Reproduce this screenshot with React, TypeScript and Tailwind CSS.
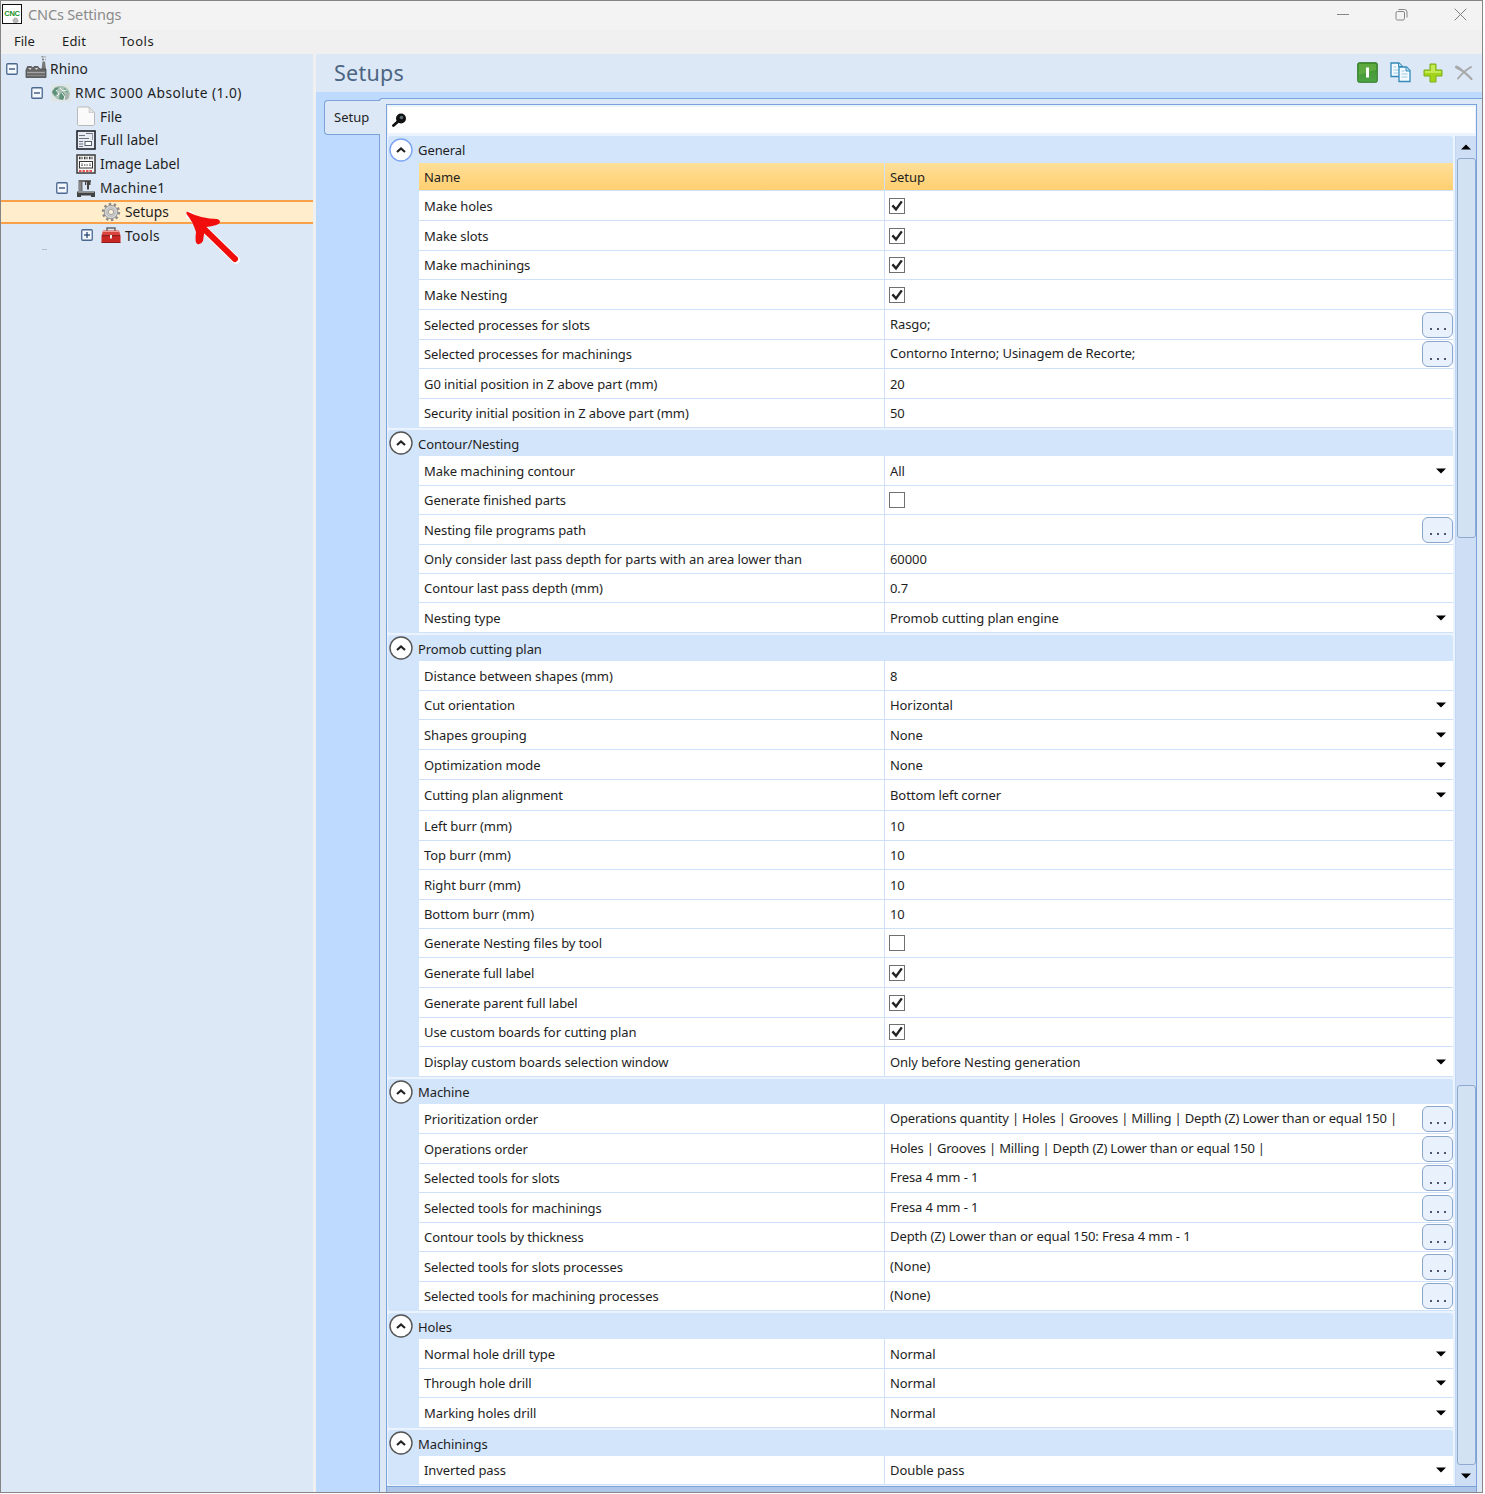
import React from 'react';

type Row = {
  label: string;
  h: string;
  value?: string;
  checked?: boolean;
  kind?: 'text' | 'check' | 'browse' | 'select';
  active?: boolean;
  tight?: boolean;
};

type Group = { title: string; head: string; rows: Row[]; focused?: boolean };

const groups: Group[] = [
  {
    title: 'General',
    head: 'h-[27px]',
    focused: true,
    rows: [
      { label: 'Name', h: 'h-[28px]', value: 'Setup', active: true },
      { label: 'Make holes', h: 'h-[30px]', kind: 'check', checked: true },
      { label: 'Make slots', h: 'h-[30px]', kind: 'check', checked: true },
      { label: 'Make machinings', h: 'h-[29px]', kind: 'check', checked: true },
      { label: 'Make Nesting', h: 'h-[30px]', kind: 'check', checked: true },
      { label: 'Selected processes for slots', h: 'h-[30px]', kind: 'browse', value: 'Rasgo;' },
      { label: 'Selected processes for machinings', h: 'h-[29px]', kind: 'browse', value: 'Contorno Interno; Usinagem de Recorte;' },
      { label: 'G0 initial position in Z above part (mm)', h: 'h-[30px]', value: '20' },
      { label: 'Security initial position in Z above part (mm)', h: 'h-[29px]', value: '50' },
    ],
  },
  {
    title: 'Contour/Nesting',
    head: 'h-[26px]',
    rows: [
      { label: 'Make machining contour', h: 'h-[30px]', kind: 'select', value: 'All' },
      { label: 'Generate finished parts', h: 'h-[29px]', kind: 'check' },
      { label: 'Nesting file programs path', h: 'h-[30px]', kind: 'browse', value: '' },
      { label: 'Only consider last pass depth for parts with an area lower than', h: 'h-[29px]', value: '60000' },
      { label: 'Contour last pass depth (mm)', h: 'h-[29px]', value: '0.7' },
      { label: 'Nesting type', h: 'h-[30px]', kind: 'select', value: 'Promob cutting plan engine' },
    ],
  },
  {
    title: 'Promob cutting plan',
    head: 'h-[26px]',
    rows: [
      { label: 'Distance between shapes (mm)', h: 'h-[30px]', value: '8' },
      { label: 'Cut orientation', h: 'h-[29px]', kind: 'select', value: 'Horizontal' },
      { label: 'Shapes grouping', h: 'h-[30px]', kind: 'select', value: 'None' },
      { label: 'Optimization mode', h: 'h-[30px]', kind: 'select', value: 'None' },
      { label: 'Cutting plan alignment', h: 'h-[31px]', kind: 'select', value: 'Bottom left corner' },
      { label: 'Left burr (mm)', h: 'h-[30px]', value: '10' },
      { label: 'Top burr (mm)', h: 'h-[29px]', value: '10' },
      { label: 'Right burr (mm)', h: 'h-[30px]', value: '10' },
      { label: 'Bottom burr (mm)', h: 'h-[29px]', value: '10' },
      { label: 'Generate Nesting files by tool', h: 'h-[29px]', kind: 'check' },
      { label: 'Generate full label', h: 'h-[30px]', kind: 'check', checked: true },
      { label: 'Generate parent full label', h: 'h-[30px]', kind: 'check', checked: true },
      { label: 'Use custom boards for cutting plan', h: 'h-[29px]', kind: 'check', checked: true },
      { label: 'Display custom boards selection window', h: 'h-[30px]', kind: 'select', value: 'Only before Nesting generation' },
    ],
  },
  {
    title: 'Machine',
    head: 'h-[25px]',
    rows: [
      { label: 'Prioritization order', h: 'h-[30px]', kind: 'browse', tight: true, value: 'Operations quantity | Holes | Grooves | Milling | Depth (Z) Lower than or equal 150 |' },
      { label: 'Operations order', h: 'h-[30px]', kind: 'browse', tight: true, value: 'Holes | Grooves | Milling | Depth (Z) Lower than or equal 150 |' },
      { label: 'Selected tools for slots', h: 'h-[29px]', kind: 'browse', value: 'Fresa 4 mm - 1' },
      { label: 'Selected tools for machinings', h: 'h-[30px]', kind: 'browse', value: 'Fresa 4 mm - 1' },
      { label: 'Contour tools by thickness', h: 'h-[29px]', kind: 'browse', value: 'Depth (Z) Lower than or equal 150: Fresa 4 mm - 1' },
      { label: 'Selected tools for slots processes', h: 'h-[30px]', kind: 'browse', value: '(None)' },
      { label: 'Selected tools for machining processes', h: 'h-[29px]', kind: 'browse', value: '(None)' },
    ],
  },
  {
    title: 'Holes',
    head: 'h-[26px]',
    rows: [
      { label: 'Normal hole drill type', h: 'h-[30px]', kind: 'select', value: 'Normal' },
      { label: 'Through hole drill', h: 'h-[29px]', kind: 'select', value: 'Normal' },
      { label: 'Marking holes drill', h: 'h-[30px]', kind: 'select', value: 'Normal' },
    ],
  },
  {
    title: 'Machinings',
    head: 'h-[26px]',
    rows: [{ label: 'Inverted pass', h: 'h-[29px]', kind: 'select', value: 'Double pass' }],
  },
];

function CheckBox({ checked }: { checked?: boolean }) {
  return (
    <svg width="16" height="16" viewBox="0 0 16 16" className="-ml-px shrink-0">
      <rect x="0.5" y="0.5" width="15" height="15" fill="#fff" stroke="#707070" />
      {checked && <path d="M3.4 7.4 L7 11.4 L12.8 3.4" fill="none" stroke="#222" strokeWidth="2.4" />}
    </svg>
  );
}

function Expander({ open }: { open: boolean }) {
  return (
    <svg width="12" height="12" viewBox="0 0 12 12" className="shrink-0">
      <rect x="0.75" y="0.75" width="10.5" height="10.5" rx="1" fill="#f4f8fd" stroke="#4a678f" strokeWidth="1.3" />
      <path d="M3 6h6" stroke="#1d3d6b" strokeWidth="1.2" />
      {!open && <path d="M6 3v6" stroke="#1d3d6b" strokeWidth="1.2" />}
    </svg>
  );
}

function FactoryIcon() {
  return (
    <svg width="22" height="22" viewBox="0 0 22 22">
      <path d="M16.500 .8h4M17 3.500h3.500" stroke="#777" strokeWidth="1.3" strokeDasharray="2 1" />
      <path d="M17.500 5.500h2.500l1 8h-4.500z" fill="#777" />
      <path d="M1 21.500V14l1.500-3.500h4L8 12l1-1.500h4L14 12l1 1h6v8.500z" fill="#666" stroke="#4c4c4c" strokeWidth="0.8" />
      <path d="M3 12.500l3.500-.8-1 2zM9.500 12.500l3.500-.8-1 2z" fill="#e3e3e3" />
      <path d="M2 16.500h18" stroke="#a5a5a5" strokeWidth="1.4" />
      <path d="M2 19.500h18" stroke="#888" strokeWidth="1.2" />
    </svg>
  );
}

function RhinoIcon() {
  return (
    <svg width="20" height="18" viewBox="0 0 20 18">
      <rect width="20" height="18" fill="#dfe6e6" />
      <path d="M1 7L4 3l4-1 4 0 4 2 3 5-1 5-3 2-1-4-3 4-5-1-5-5z" fill="#a9c2b5" />
      <path d="M1 8l3-4 4-1-2 3 1 3-3 3zM9 10l3-2 2 3-2 5-4-1zM13 4l3 2 1 3-3-2z" fill="#5f9178" />
      <path d="M5 6l3 4-2 2M9 4l3 3 4-1M11 9l3 4" stroke="#eef5f0" fill="none" />
      <path d="M15 9l3 1-1 5-3 1" fill="#a9b0ad" />
    </svg>
  );
}

function FileIcon() {
  return (
    <svg width="20" height="20" viewBox="0 0 20 20">
      <path d="M2.5 1C2 1 1.5 1.5 1.5 2v16c0 .8.5 1.5 1 1.5h15c.5 0 1-.7 1-1.5V6.500L13 1z" fill="#fafafa" stroke="#b9b9b9" />
      <path d="M13 1v5.500h5.500z" fill="#e3e3e3" stroke="#c2c2c2" strokeWidth="0.7" />
    </svg>
  );
}

function FullLabelIcon() {
  return (
    <svg width="20" height="20" viewBox="0 0 20 20">
      <rect x="1" y="1" width="18" height="18" fill="#e9ecf2" stroke="#20242c" strokeWidth="1.6" />
      <path d="M3 5.500h6M3 8.500h10M3 11.500h4M3 14h4M3 16.500h4M10 3.500h6" stroke="#6a7382" strokeWidth="1.2" />
      <path d="M16.500 3v7" stroke="#8e96a3" />
      <rect x="9" y="11.500" width="6.500" height="4" fill="#fff" stroke="#555e6c" />
    </svg>
  );
}

function ImageLabelIcon() {
  return (
    <svg width="20" height="20" viewBox="0 0 20 20">
      <rect x="1" y="1" width="18" height="18" fill="#f6f6f6" stroke="#3a3a3a" strokeWidth="1.5" />
      <path d="M3 4h14" stroke="#333" strokeWidth="2.4" strokeDasharray="1.5 1 1 1.5" />
      <rect x="3.500" y="7.500" width="13" height="6.500" fill="#fff" stroke="#333" />
      <path d="M6 9.500v3M14 9.500v3M8 11h4" stroke="#333" strokeWidth="1.2" strokeDasharray="1 .6" />
      <path d="M3 17h14" stroke="#e02020" strokeWidth="1.4" strokeDasharray="2.5 1" />
    </svg>
  );
}

function MachineIcon() {
  return (
    <svg width="20" height="20" viewBox="0 0 20 20">
      <path d="M2.500 2H15v2H6.500v9h-4z" fill="#6c6c6c" />
      <path d="M4 4v9" stroke="#a3a3a3" />
      <path d="M9 3h5.500v4H13v4.500h-2V7H9z" fill="#444" />
      <path d="M10.500 4v3" stroke="#bbb" />
      <path d="M1 13.500h18V19h-4v-1.500H5V19H1z" fill="#434343" />
      <path d="M2 14.500h16" stroke="#8d8d8d" />
    </svg>
  );
}

function GearIcon() {
  return (
    <svg width="20" height="20" viewBox="0 0 20 20">
      <circle cx="10" cy="10" r="8" fill="none" stroke="#8b8b8b" strokeWidth="2.4" strokeDasharray="2.5 2.526" />
      <circle cx="10" cy="10" r="6.700" fill="#d4d4d4" stroke="#8f8f8f" strokeWidth="0.9" />
      <circle cx="10" cy="10" r="4.200" fill="none" stroke="#b5b5b5" strokeWidth="1" />
      <circle cx="10" cy="10" r="2.600" fill="#fdf3dc" stroke="#909090" strokeWidth="0.8" />
    </svg>
  );
}

function ToolboxIcon() {
  return (
    <svg width="20" height="18" viewBox="0 0 20 18">
      <path d="M6 5V2h8v3" fill="none" stroke="#666" strokeWidth="1.5" />
      <path d="M2 4.500h16l1.500 5H.5z" fill="#d8453f" />
      <path d="M.5 9.500h19V16.500H.5z" fill="#c92724" />
      <path d="M1 9.700h18" stroke="#7f1212" />
      <path d="M2 5.500h16" stroke="#f09a92" />
      <rect x="9" y="9" width="2" height="3.5" fill="#eee" />
      <path d="M.5 16.500h19" stroke="#8e1b1b" />
    </svg>
  );
}

const tree = [
  { name: 'Rhino', pad: 'pl-[5px]', open: true, icon: <FactoryIcon />, shift: 'pb-[3px]', tracking: 'tracking-[0.1px]' },
  { name: 'RMC 3000 Absolute (1.0)', pad: 'pl-[30px]', open: true, icon: <RhinoIcon />, tracking: 'tracking-[0.45px]' },
  { name: 'File', pad: 'pl-[55px]', icon: <FileIcon /> },
  { name: 'Full label', pad: 'pl-[55px]', icon: <FullLabelIcon />, tracking: 'tracking-[0.1px]' },
  { name: 'Image Label', pad: 'pl-[55px]', icon: <ImageLabelIcon /> },
  { name: 'Machine1', pad: 'pl-[55px]', open: true, icon: <MachineIcon />, tracking: 'tracking-[0.3px]' },
  { name: 'Setups', pad: 'pl-[80px]', icon: <GearIcon />, selected: true },
  { name: 'Tools', pad: 'pl-[80px]', open: false, icon: <ToolboxIcon />, tracking: 'tracking-[0.3px]' },
];

function TitleBar() {
  return (
    <div className="flex h-[29px] items-center bg-[#f3f3f3] pl-px">
      <div className="relative -mt-[3px] flex size-[20px] items-center justify-center border-[1.5px] border-[#111] bg-white">
        <svg width="7" height="6" viewBox="0 0 7 6" className="absolute bottom-0 right-[2px]">
          <circle cx="3.5" cy="3.5" r="2.5" fill="#bbb" stroke="#999" strokeDasharray="1.5 1" />
        </svg>
        <span className="relative font-['Liberation_Sans',sans-serif] text-[7.5px] font-bold leading-[12px] tracking-[-0.2px] text-[#17911f]">CNC</span>
      </div>
      <span className="-mt-[2px] ml-[6px] text-[14.5px] tracking-[-0.15px] text-[#8a8a8a]">CNCs Settings</span>
      <div className="-mt-[2px] ml-auto flex items-center gap-[44px] pr-[15px]">
        <svg width="14" height="14" viewBox="0 0 14 14" className="mr-px">
          <path d="M1 6.500h12" stroke="#868686" />
        </svg>
        <svg width="13" height="13" viewBox="0 0 13 13" fill="none" stroke="#868686">
          <rect x="1" y="3.5" width="8.5" height="8.5" rx="1.5" />
          <path d="M3.500 1.500h6a2.500 2.500 0 0 1 2.500 2.500v5.500" />
        </svg>
        <svg width="13" height="13" viewBox="0 0 13 13" className="ml-[2px]">
          <path d="M.7.7l11.600 11.600M12.300.7L.7 12.300" stroke="#808080" />
        </svg>
      </div>
    </div>
  );
}

function Tree() {
  return (
    <div className="relative w-[312px] shrink-0 bg-[#dce8f6] pt-[3px]">
      {tree.map((n) => (
        <div
          key={n.name}
          className={`flex h-[23.8px] items-center ${n.pad} ${
            n.selected ? 'border-y-2 border-[#f9a04a] bg-[#ffedcb]' : ''
          }`}
        >
          <div className="w-[12px]">{n.open !== undefined && <Expander open={n.open} />}</div>
          <div className={`ml-[7px] flex w-[22px] justify-center ${n.shift ?? ''}`}>{n.icon}</div>
          <span className={`ml-[3px] whitespace-nowrap pt-px text-[13.75px] text-[#1e1e1e] ${n.tracking ?? ''}`}>{n.name}</span>
        </div>
      ))}
      <div className="ml-[41px] mt-[2px] h-px w-[5px] bg-[#b3bccb]" />
      <svg width="60" height="60" viewBox="0 0 60 60" className="absolute left-[181px] top-[154px]">
        <path d="M8 7.500L54 52" stroke="#fff" strokeWidth="8" strokeLinecap="round" />
        <path d="M17 16L53 51" stroke="#f20d0d" strokeWidth="6" strokeLinecap="round" />
        <path d="M4.500 4Q5 3.500 6 4Q20 11 35 11Q39 12 37.500 15Q36 17.500 24 19Q21.500 27 21 33Q19 37 15.500 36Q12.500 35 14 24Q11 14 4.500 6z" fill="#f20d0d" />
      </svg>
    </div>
  );
}

function HeaderIcons() {
  return (
    <div className="ml-auto flex items-center pb-px pr-[8px]">
      <svg width="21" height="21" viewBox="0 0 21 21">
        <defs>
          <linearGradient id="on" x1="0" y1="0" x2="0" y2="1">
            <stop offset="0" stopColor="#3f9328" />
            <stop offset="1" stopColor="#4ea346" />
          </linearGradient>
        </defs>
        <rect x="0.7" y="0.7" width="19.6" height="19.6" rx="1.5" fill="url(#on)" stroke="#347a2b" />
        <path d="M2 2h17v6q-8 1-17 5z" fill="#70b84d" opacity=".6" />
        <rect x="9" y="5.5" width="3" height="10" fill="#fff" />
      </svg>
      <svg width="21" height="21" viewBox="0 0 21 21" className="ml-[12px]" stroke="#3389b8" fill="#f4fbff">
        <path d="M1 1h8l3.500 3.500V14.500H1z" strokeWidth="1.3" />
        <path d="M8.500 1v3.500h4" fill="#b7e0f5" />
        <path d="M3.500 5h3M3.500 8h6M3.500 11h5" stroke="#9fcbe6" />
        <path d="M9 5h7.500l3.500 3.500v11H9z" strokeWidth="1.3" />
        <path d="M16 5v4h4" fill="#b7e0f5" />
        <path d="M11.500 9h3M11.500 12h6M11.500 15h6" stroke="#9fcbe6" />
      </svg>
      <svg width="20" height="20" viewBox="0 0 20 20" className="ml-[12px]">
        <path d="M7 1h6v6h6v6h-6v6H7v-6H1V7h6z" fill="#a2d51a" stroke="#7aad18" />
        <path d="M8 2h4v6h6v2H2V8h6z" fill="#d0f06a" opacity=".75" />
      </svg>
      <svg width="18" height="16" viewBox="0 0 18 16" className="ml-[12px] mr-px" fill="none" stroke="#a9a9a9" strokeLinecap="round">
        <path d="M1.500 2L5 4" strokeWidth="3" />
        <path d="M2 2.500Q9 6 16.500 14" strokeWidth="2.2" />
        <path d="M16 2Q9 6 3 13.500" strokeWidth="2" />
      </svg>
    </div>
  );
}

function GridRow({ row }: { row: Row }) {
  const isBrowse = row.kind === 'browse';
  return (
    <div
      className={`flex border-b border-[#cfe1f8] ${row.h} ${
        row.active ? 'bg-linear-to-b from-[#ffdf98] to-[#ffcf70]' : 'bg-white'
      }`}
    >
      <div className="flex w-[466px] shrink-0 items-center border-r border-[#cfe1f8] pl-[5px] pt-[2px]">{row.label}</div>
      <div className="flex min-w-0 flex-1 items-center pl-[5px]">
        {row.kind === 'check' ? (
          <CheckBox checked={row.checked} />
        ) : (
          <span className={`whitespace-nowrap ${isBrowse ? '' : 'pt-[2px]'} ${row.tight ? 'tracking-[-0.18px]' : ''}`}>
            {row.value}
          </span>
        )}
        {isBrowse && (
          <button className="ml-auto flex h-[26px] w-[31px] items-center justify-center gap-[5px] rounded-[6px] border border-[#8ba6cb] bg-[#e9f1fc] pt-[9px]">
            <i className="size-[2px] bg-[#4a5872]" />
            <i className="size-[2px] bg-[#4a5872]" />
            <i className="size-[2px] bg-[#4a5872]" />
          </button>
        )}
        {row.kind === 'select' && (
          <svg width="10" height="6" viewBox="0 0 10 6" className="ml-auto mr-[7px]">
            <path d="M0 0.500h10L5 5.500z" fill="#000" />
          </svg>
        )}
      </div>
    </div>
  );
}

function PropertyGroup({ group }: { group: Group }) {
  return (
    <div className="mb-[2px] rounded-[3px] bg-[#d3e5fb]">
      <div className={`flex items-center ${group.head}`}>
        <svg width="24" height="24" viewBox="0 0 24 24" className="ml-px shrink-0">
          <circle cx="12" cy="12" r="11" fill="#fff" stroke={group.focused ? '#7ba4f4' : '#555'} strokeWidth="1.4" />
          <path d="M8 14l4-3.500 4 3.500" fill="none" stroke="#222" strokeWidth="2.2" />
        </svg>
        <span className="ml-[5px] pt-[3px]">{group.title}</span>
      </div>
      <div className="ml-[31px]">
        {group.rows.map((r) => (
          <GridRow key={r.label} row={r} />
        ))}
      </div>
    </div>
  );
}

function ScrollBar() {
  return (
    <div className="ml-[2px] flex w-[21px] shrink-0 flex-col items-center border-l border-[#c0d6f3] bg-[#cedff5]">
      <svg width="10" height="6" viewBox="0 0 10 6" className="mt-[8px]">
        <path d="M0 5.500h10L5 .5z" fill="#000" />
      </svg>
      <div className="mt-[8px] h-[380px] w-[19px] rounded-[3px] border-[1.5px] border-[#8ea9cf] bg-[#d3e2f3]" />
      <div className="mt-[547px] h-[380px] w-[19px] rounded-[3px] border-[1.5px] border-[#8ea9cf] bg-[#d3e2f3]" />
      <svg width="10" height="6" viewBox="0 0 10 6" className="mt-[8px]">
        <path d="M0 .5h10L5 5.500z" fill="#000" />
      </svg>
    </div>
  );
}

export default function App() {
  return (
    <div className="h-[1494px] w-[1485px] bg-white font-['Noto_Sans','Open_Sans',sans-serif] text-[#1e1e1e]">
      <div className="flex h-[1493px] w-[1483px] flex-col overflow-hidden border border-[#858585]">
        <TitleBar />
        <div className="flex h-[24px] shrink-0 items-center bg-[#f0f0f0] pl-[13px] text-[13px]">
          <span className="w-[48px]">File</span>
          <span className="w-[58px] tracking-[0.2px]">Edit</span>
          <span className="tracking-[0.5px]">Tools</span>
        </div>
        <div className="flex min-h-0 flex-1 bg-[#f0f0f0]">
          <Tree />
          <div className="ml-[3px] flex min-w-0 flex-1 flex-col bg-[#bfdaff]">
            <div className="flex h-[38px] shrink-0 items-center bg-[#dce8f6] pl-[18px]">
              <h1 className="text-[21.5px] tracking-[0.25px] text-[#4c6582]">Setups</h1>
              <HeaderIcons />
            </div>
            <div className="mt-[6px] flex min-h-0 flex-1">
              <div className="w-[63px] shrink-0 pt-[2px]">
                <div className="relative z-10 ml-[8px] flex h-[35px] w-[56px] items-center rounded-l-[4px] border border-r-0 border-[#7ba2d9] bg-[#dce8f6] pl-[9px] pt-px text-[13px]">
                  Setup
                </div>
              </div>
              <div className="flex min-w-0 flex-1 rounded-tl-[3px] border-l border-t border-[#7ba2d9] bg-[#dce8f6] pl-[6px] pr-[5px] pt-[5px]">
                <div className="flex min-w-0 flex-1 flex-col border border-b-0 border-[#7ba2d9] bg-[#eaf3fe]">
                  <div className="ml-px mr-px mt-[2px] flex h-[26px] shrink-0 items-center bg-white pl-[4px]">
                    <svg width="15" height="14" viewBox="0 0 15 14">
                      <path d="M1.500 12.500L6 8.500" stroke="#111" strokeWidth="2.8" strokeLinecap="round" />
                      <circle cx="9" cy="5.5" r="5" fill="#111" />
                      <circle cx="9.5" cy="4.5" r="1.8" fill="#5b6d78" />
                    </svg>
                  </div>
                  <div className="mt-[3px] flex h-[1350px] shrink-0 text-[13px] tracking-[-0.08px]">
                    <div className="min-w-0 flex-1 pl-px">
                      {groups.map((g) => (
                        <PropertyGroup key={g.title} group={g} />
                      ))}
                    </div>
                    <ScrollBar />
                  </div>
                  <div className="flex-1 border-t border-[#7ba2d9] bg-[#adc6e9]" />
                </div>
              </div>
            </div>
          </div>
        </div>
      </div>
    </div>
  );
}
